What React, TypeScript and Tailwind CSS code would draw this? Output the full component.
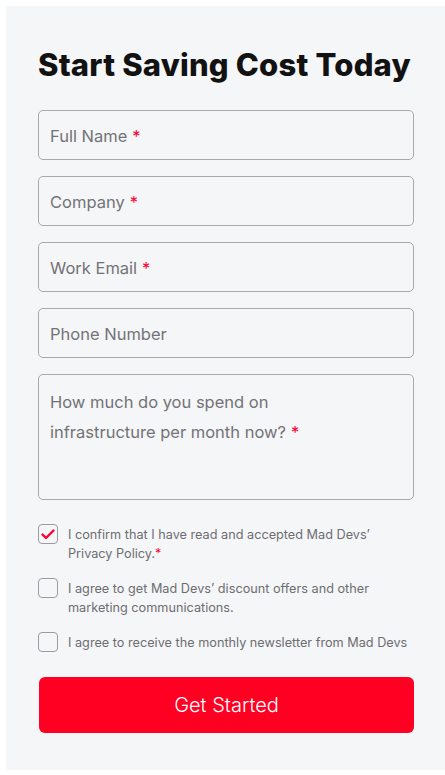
import React from "react";

function Field({ label, required }: { label: string; required?: boolean }) {
  return (
    <div className="h-[50px] w-full rounded-[5px] border border-[#a9a9ab] flex items-center px-[11px]">
      <span className="text-[16.5px] leading-[20px] pt-[2px] text-[#737377]">
        {label}
        {required && <span className="text-[#ff0033] ml-[5px]">*</span>}
      </span>
    </div>
  );
}

function Check({ checked, children }: { checked?: boolean; children: React.ReactNode }) {
  return (
    <div className="flex items-start gap-[10px]">
      <div className="h-[20px] w-[20px] shrink-0 rounded-[4px] border-[1.5px] border-[#9c9ca0] flex items-center justify-center">
        {checked && (
          <svg width="14" height="11" viewBox="0 0 14 11" fill="none">
            <path d="M1.5 5.5 L5 9 L12.5 1.5" stroke="#ff0033" strokeWidth="2.4" strokeLinecap="round" strokeLinejoin="round" />
          </svg>
        )}
      </div>
      <div className="text-[12.7px] leading-[19px] text-[#6d6d71] pt-[1px] whitespace-nowrap">{children}</div>
    </div>
  );
}

export default function App() {
  return (
    <div className="min-h-[775px] bg-white pt-[6px] pl-[6px]" style={{ fontFamily: "Inter, 'Noto Sans', sans-serif" }}>
      <div className="w-[439px] h-[764px] bg-[#f5f6f8] pl-[32px] pr-[31px] pt-[40px]">
        <h1 className="text-[31px] leading-[38px] font-extrabold text-[#121212] tracking-[0.2px] whitespace-nowrap">
          Start Saving Cost Today
        </h1>
        <div className="mt-[26px] flex flex-col gap-[16px]">
          <Field label="Full Name" required />
          <Field label="Company" required />
          <Field label="Work Email" required />
          <Field label="Phone Number" />
          <div className="h-[126px] w-full rounded-[5px] border border-[#a9a9ab] px-[11px] pt-[12px]">
            <p className="text-[16.5px] leading-[30px] text-[#737377]">
              How much do you spend on
              <br />
              infrastructure per month now?<span className="text-[#ff0033] ml-[5px]">*</span>
            </p>
          </div>
        </div>
        <div className="mt-[24px] flex flex-col gap-[15px]">
          <Check checked>
            I confirm that I have read and accepted Mad Devs’
            <br />
            Privacy Policy.<span className="text-[#ff0033]">*</span>
          </Check>
          <Check>
            I agree to get Mad Devs’ discount offers and other
            <br />
            marketing communications.
          </Check>
          <Check>I agree to receive the monthly newsletter from Mad Devs</Check>
        </div>
        <button className="mt-[25px] ml-[1px] h-[56px] w-[375px] rounded-[6px] bg-[#ff0022] text-white text-[20px] font-light">
          Get Started
        </button>
      </div>
    </div>
  );
}
